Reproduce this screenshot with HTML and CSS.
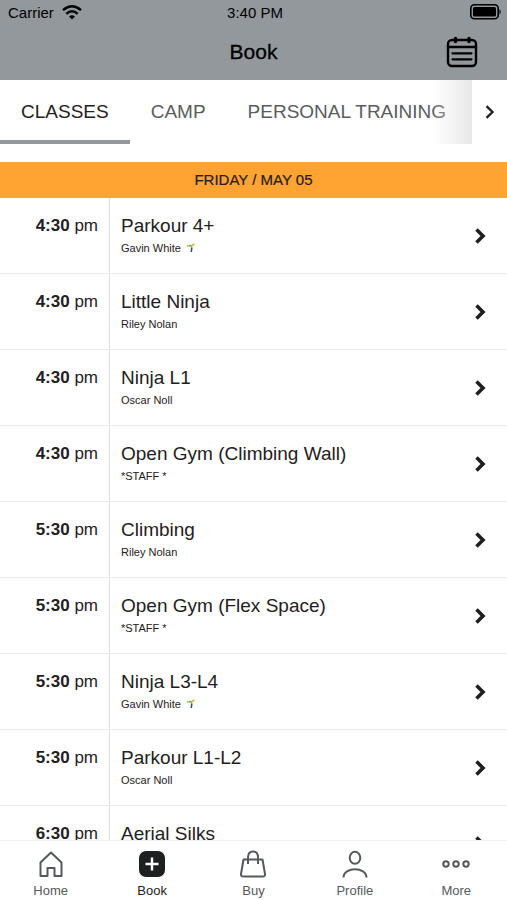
FILE: index.html
```html
<!DOCTYPE html>
<html lang="en">
<head>
<meta charset="utf-8">
<meta name="viewport" content="width=device-width, initial-scale=1">
<title>Book</title>
<link rel="stylesheet" href="styles.css">
</head>
<body>
<svg class="sprite">
  <symbol id="chevron" viewBox="0 0 12 18"><path d="M2.500 2.500 9 9l-6.500 6.500" fill="none" stroke="currentColor" stroke-width="3.600"/></symbol>
  <symbol id="acrobat" viewBox="0 0 10 10"><path d="M1 3 5 2.500 6 5 5 9" fill="none" stroke="#55a58b" stroke-width="1.500"/><path d="M5 3 8.500 1" stroke="#e9ad35" stroke-width="1.500"/><path d="M5.500 5v4" stroke="#31545c" stroke-width="1.200"/><circle cx="2" cy="3" r="1" fill="#f0c36a"/></symbol>
</svg>
<div class="app">
  <header class="top">
    <div class="status">
      <div class="carrier">Carrier
        <svg width="20" height="15" viewBox="0 0 20 15" fill="none" stroke="#000" stroke-width="2.400"><path d="M1 5.200Q10-2.500 19 5.200M4.300 8.700q5.700-4.700 11.400 0"/><path d="M7 11.500q3-2.300 6 0l-3 3z" fill="#000" stroke="none"/></svg>
      </div>
      <div class="clock">3:40 PM</div>
      <svg class="battery" width="32" height="16" viewBox="0 0 32 16"><rect x=".8" y=".8" width="27.400" height="14" rx="3.500" fill="none" stroke="#000" stroke-width="1.600"/><rect x="3" y="3" width="23" height="9.600" rx="1.500"/><path d="M29.500 5q2.500 2.800 0 5.600z"/></svg>
    </div>
    <div class="bar">
      <h1>Book</h1>
      <button class="calendar" aria-label="Calendar"><svg width="32" height="32" viewBox="0 0 32 32" fill="none" stroke="#000" stroke-width="2.400" stroke-linecap="round"><rect x="2" y="4" width="28" height="26" rx="4"/><path d="M2 11h28"/><path d="M9.500 2.500v3M23 2.500v3" stroke-width="3.400"/><path d="M6.500 17.300h19M6.500 23.300h19" stroke-width="2.200"/></svg></button>
    </div>
  </header>
  <nav class="tabs" aria-label="Categories">
    <div class="tab-list">
      <a class="tab active" href="#classes">CLASSES</a>
      <a class="tab" href="#camp">CAMP</a>
      <a class="tab" href="#personal">PERSONAL TRAINING</a>
    </div>
    <button class="next" aria-label="More categories"><svg width="10" height="14" viewBox="0 0 10 14" fill="none" stroke="#1f2022" stroke-width="2.300"><path d="m1.500 1.200 6 5.800-6 5.800"/></svg></button>
  </nav>
  <h2 class="date">FRIDAY / MAY 05</h2>
  <main class="list">
    <a class="row" href="#c1"><span class="time"><b>4:30</b> pm</span><span class="info"><span class="name">Parkour 4+</span><span class="coach">Gavin White <svg class="badge"><use href="#acrobat"/></svg></span></span><svg class="go"><use href="#chevron"/></svg></a>
    <a class="row" href="#c2"><span class="time"><b>4:30</b> pm</span><span class="info"><span class="name">Little Ninja</span><span class="coach">Riley Nolan</span></span><svg class="go"><use href="#chevron"/></svg></a>
    <a class="row" href="#c3"><span class="time"><b>4:30</b> pm</span><span class="info"><span class="name">Ninja L1</span><span class="coach">Oscar Noll</span></span><svg class="go"><use href="#chevron"/></svg></a>
    <a class="row" href="#c4"><span class="time"><b>4:30</b> pm</span><span class="info"><span class="name">Open Gym (Climbing Wall)</span><span class="coach">*STAFF *</span></span><svg class="go"><use href="#chevron"/></svg></a>
    <a class="row" href="#c5"><span class="time"><b>5:30</b> pm</span><span class="info"><span class="name">Climbing</span><span class="coach">Riley Nolan</span></span><svg class="go"><use href="#chevron"/></svg></a>
    <a class="row" href="#c6"><span class="time"><b>5:30</b> pm</span><span class="info"><span class="name">Open Gym (Flex Space)</span><span class="coach">*STAFF *</span></span><svg class="go"><use href="#chevron"/></svg></a>
    <a class="row" href="#c7"><span class="time"><b>5:30</b> pm</span><span class="info"><span class="name">Ninja L3-L4</span><span class="coach">Gavin White <svg class="badge"><use href="#acrobat"/></svg></span></span><svg class="go"><use href="#chevron"/></svg></a>
    <a class="row" href="#c8"><span class="time"><b>5:30</b> pm</span><span class="info"><span class="name">Parkour L1-L2</span><span class="coach">Oscar Noll</span></span><svg class="go"><use href="#chevron"/></svg></a>
    <a class="row" href="#c9"><span class="time"><b>6:30</b> pm</span><span class="info"><span class="name">Aerial Silks</span></span><svg class="go"><use href="#chevron"/></svg></a>
  </main>
  <nav class="bottom" aria-label="Main">
    <a href="#home"><svg viewBox="0 0 28 28"><path d="M3.500 12.500 14 2.500l10.500 10V26h-7v-8h-7v8h-7z"/></svg>Home</a>
    <a class="current" href="#book"><svg viewBox="0 0 28 28"><rect x="1" y="1" width="26" height="26" rx="7" fill="#1f2022" stroke="none"/><path d="M14 7.500v13M7.500 14h13" stroke="#fff" stroke-width="2.400"/></svg>Book</a>
    <a href="#buy"><svg viewBox="0 0 28 28"><path d="M4.500 9.500h19L26 24q.3 2.500-2.500 2.500h-19Q1.700 26.500 2 24zM9 14V7.500q0-6 5-6t5 6V14"/></svg>Buy</a>
    <a href="#profile"><svg viewBox="0 0 28 28"><ellipse cx="14" cy="7.800" rx="5.300" ry="6"/><path d="M2.500 27.500c0-11 23-11 23 0"/></svg>Profile</a>
    <a href="#more"><svg viewBox="0 0 28 28"><circle cx="4" cy="14" r="2.700"/><circle cx="14" cy="14" r="2.700"/><circle cx="24" cy="14" r="2.700"/></svg>More</a>
  </nav>
</div>
</body>
</html>
```
FILE: styles.css
```css
* {
  box-sizing: border-box;
}

body {
  margin: 0;
  background: #fff;
  color: #1f2022;
  font-family: "Liberation Sans", Arial, sans-serif;
}

a {
  color: inherit;
  text-decoration: none;
}

button {
  padding: 0;
  border: 0;
  background: none;
}

svg {
  flex: none;
}

.sprite {
  display: none;
}

.app {
  display: flex;
  flex-direction: column;
  height: 100vh;
}

.top {
  flex: none;
  background: #92989c;
  color: #000;
}

.status {
  display: grid;
  grid-template-columns: 1fr auto 1fr;
  align-items: center;
  height: 24px;
  padding: 0 5px 0 8px;
  font-size: 15px;
}

.carrier {
  display: flex;
  align-items: center;
  gap: 8px;
}

.battery {
  justify-self: end;
}

.bar {
  display: grid;
  grid-template-columns: 1fr auto 1fr;
  align-items: center;
  height: 56px;
  padding: 0 29px;
}

h1 {
  grid-column: 2;
  margin: 0;
  font-size: 21px;
  font-weight: 400;
  -webkit-text-stroke: 0.3px;
}

.calendar {
  display: flex;
  justify-self: end;
}

.tabs {
  display: flex;
  flex: none;
  height: 64px;
  margin-bottom: 18px;
}

.tab-list {
  position: relative;
  display: flex;
  flex: 1;
  overflow: hidden;
}

.tab-list::after {
  content: "";
  position: absolute;
  inset: 0 0 0 auto;
  width: 40px;
  background: linear-gradient(to right, transparent, #e8e8e8);
}

.tab {
  padding: 0 21px;
  color: #5a5c60;
  font-size: 19px;
  line-height: 64px;
  white-space: nowrap;
}

.tab.active {
  border-bottom: 4px solid #92989c;
  color: #1f2022;
}

.next {
  display: flex;
  align-items: center;
  justify-content: center;
  width: 35px;
}

.date {
  flex: none;
  margin: 0;
  background: #ffa333;
  font-size: 15px;
  font-weight: 400;
  line-height: 36px;
  text-align: center;
  -webkit-text-stroke: 0.2px;
}

.list {
  flex: 1;
  min-height: 0;
  overflow-y: auto;
  scrollbar-width: none;
}

.row {
  display: flex;
  align-items: center;
  height: 76px;
  padding-right: 21px;
  border-bottom: 1px solid #e8e9ea;
}

.time {
  align-self: stretch;
  width: 110px;
  padding: 16px 11px 0 0;
  border-right: 1px solid #dcdddf;
  font-size: 17px;
  line-height: 24px;
  text-align: right;
}

.info {
  display: flex;
  flex: 1;
  flex-direction: column;
  align-self: stretch;
  gap: 2px;
  padding: 16px 11px 0;
}

.name {
  font-size: 19px;
  line-height: 24px;
}

.coach {
  display: flex;
  align-items: center;
  gap: 5px;
  font-size: 11px;
  line-height: 16px;
}

.badge {
  width: 10px;
  height: 10px;
}

.go {
  width: 12px;
  height: 18px;
}

.bottom {
  display: grid;
  grid-template-columns: repeat(5, 1fr);
  flex: none;
  height: 60px;
  padding-top: 9px;
  border-top: 1px solid #f0f1f2;
  color: #55585c;
  font-size: 13px;
  line-height: 16px;
}

.bottom a {
  display: flex;
  flex-direction: column;
  align-items: center;
  gap: 5px;
}

.bottom svg {
  width: 28px;
  height: 28px;
  fill: none;
  stroke: currentColor;
  stroke-width: 2;
  stroke-linejoin: round;
}

.bottom .current {
  color: #1f2022;
}
```
